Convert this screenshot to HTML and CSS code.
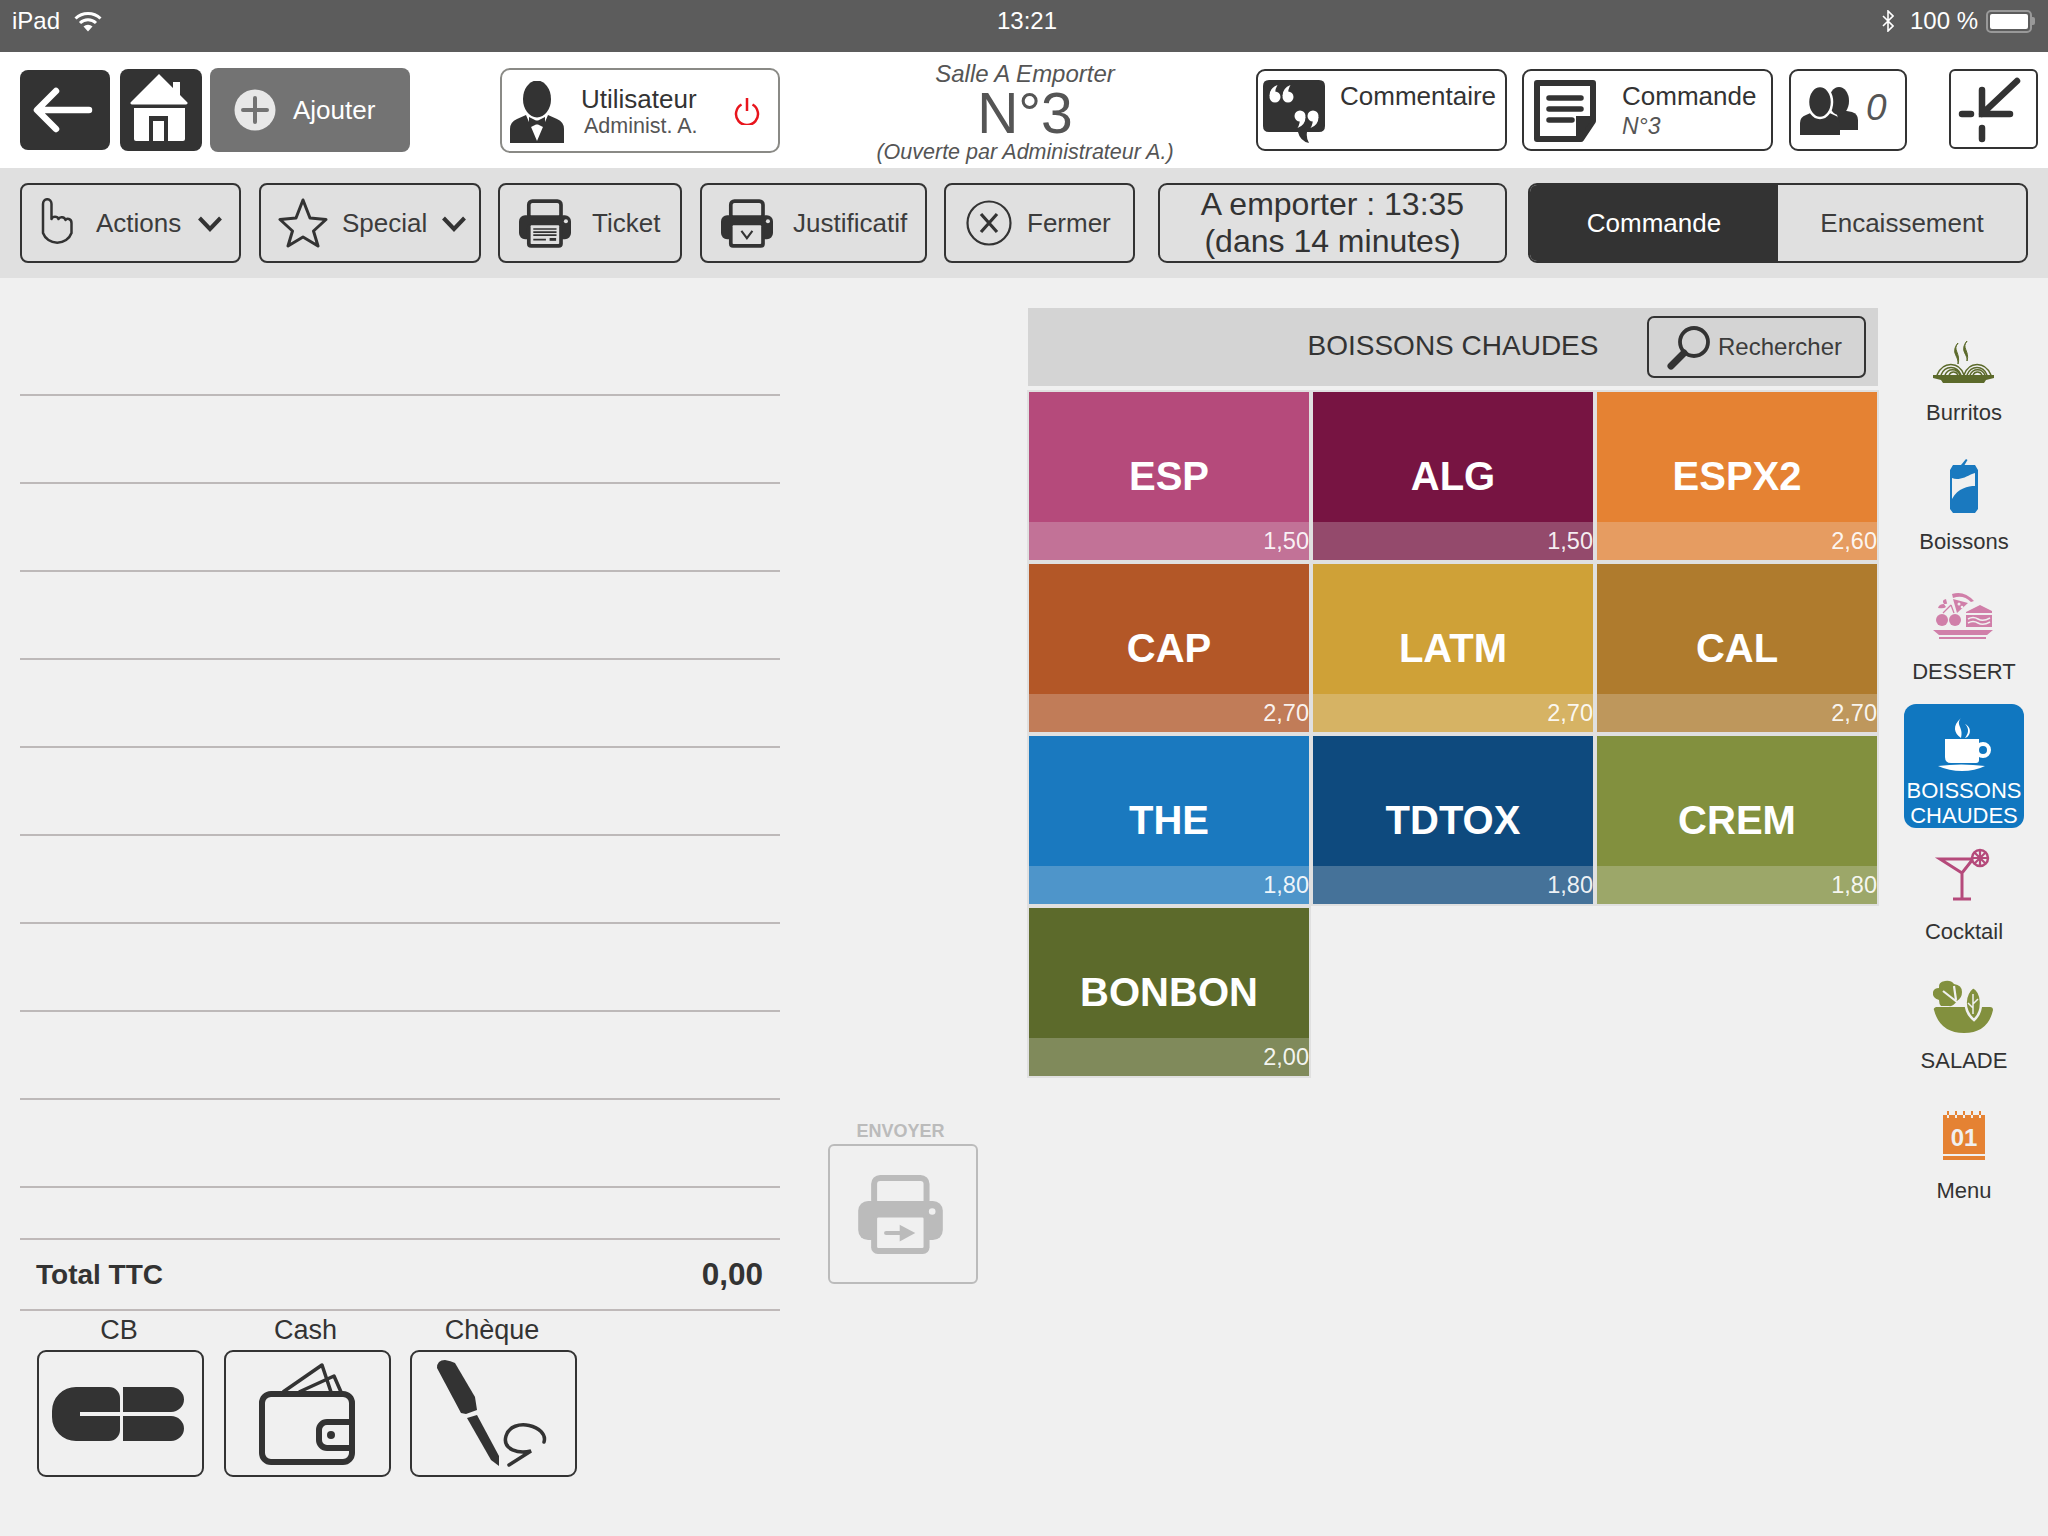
FILE: index.html
```html
<!DOCTYPE html>
<html lang="fr">
<head>
<meta charset="utf-8">
<title>Commande N°3</title>
<link rel="stylesheet" href="styles.css">
</head>
<body>
<div class="status">
  <div class="status-left"><span>iPad</span>
    <svg class="wifi" viewBox="0 0 28 21"><path d="M1.500 7.500a18 18 0 0 1 25 0" fill="none" stroke="#fff" stroke-width="3"/><path d="M6 12a11.500 11.500 0 0 1 16 0" fill="none" stroke="#fff" stroke-width="3"/><path d="M14 20.500l-4.500-5a6.500 6.500 0 0 1 9 0z" fill="#fff"/></svg>
  </div>
  <div class="status-time">13:21</div>
  <div class="status-right">
    <svg class="bt" viewBox="0 0 12 22"><path d="M1 6l10 10-5 5V1l5 5L1 16" fill="none" stroke="#fff" stroke-width="1.600"/></svg>
    <span>100 %</span>
    <span class="battery"><span class="battery-fill"></span></span><span class="battery-nub"></span>
  </div>
</div>

<header class="head">
  <button class="hb hb-back"><svg width="90" height="80" viewBox="0 0 90 80"><path d="M36 21L17 40l19 19M18 40h51" fill="none" stroke="#fff" stroke-width="6.500" stroke-linecap="round" stroke-linejoin="round"/></svg></button>
  <button class="hb hb-home"><svg width="82" height="82" viewBox="0 0 82 82"><path d="M39 5L53 19V13h7v13l7.500 7.500q.5 2-1.500 2H12q-2 0-1.500-2z" fill="#fff"/><path d="M14 39h51v31q0 2-2 2H16q-2 0-2-2z" fill="#fff"/><path d="M29 47h19v25h-4V52H33v20h-4z" fill="#333"/></svg></button>
  <button class="hb hb-add"><svg width="42" height="42" viewBox="0 0 42 42"><circle cx="21" cy="21" r="20.500" fill="#e8e8e8"/><path d="M21 9v24M9 21h24" stroke="#737373" stroke-width="4" stroke-linecap="round"/></svg><span>Ajouter</span></button>
  <div class="user">
    <svg class="avatar" width="54" height="62" viewBox="0 0 54 62"><ellipse cx="27" cy="18" rx="14" ry="18.500" fill="#333"/><path d="M0 62V48q0-7 7-10l9-4 11 26 11-26 9 4q7 3 7 10v14z" fill="#333"/><path d="M19 36l7 3.500h2l7-3.500v11l-7-3.500h-2l-7 3.500z" fill="#333"/></svg>
    <div class="user-text"><div class="user-role">Utilisateur</div><div class="user-name">Administ. A.</div></div>
    <svg class="power" width="26" height="28" viewBox="0 0 26 28"><path d="M7.500 7.500a11 11 0 1 0 11 0M13 1v13" fill="none" stroke="#e8141c" stroke-width="2.500"/></svg>
  </div>
  <div class="table-info">
    <div class="table-room">Salle A Emporter</div>
    <div class="table-num">N°3</div>
    <div class="table-open">(Ouverte par Administrateur A.)</div>
  </div>
  <div class="hc hc-comment">
    <svg width="62" height="64" viewBox="0 0 62 64"><path d="M6 0h50q6 0 6 6v40q0 6-6 6H44q-1 6 2 11-9-2-11-11H6q-6 0-6-6V6q0-6 6-6z" fill="#333"/><g fill="#fff"><circle cx="12" cy="17" r="5.500"/><path d="M6.500 16q0-8 8-11-3 5-2 9z"/><circle cx="25" cy="17" r="5.500"/><path d="M19.500 16q0-8 8-11-3 5-2 9z"/><circle cx="37" cy="36" r="5.500"/><path d="M42.500 37q0 8-8 11 3-5 2-9z"/><circle cx="50" cy="36" r="5.500"/><path d="M55.500 37q0 8-8 11 3-5 2-9z"/></g></svg>
    <div class="hc-title">Commentaire</div>
  </div>
  <div class="hc hc-order">
    <svg width="62" height="62" viewBox="0 0 62 62"><path d="M3 3h56v38L47 59H3z" fill="#fff" stroke="#333" stroke-width="6" stroke-linejoin="round"/><path d="M59 38H44v21" fill="#333" stroke="#333" stroke-width="4"/><path d="M15 18h32M15 29h32M15 40h23" stroke="#333" stroke-width="5.500" stroke-linecap="round"/></svg>
    <div class="hc-text"><div class="hc-title">Commande</div><div class="hc-sub">N°3</div></div>
  </div>
  <div class="hc hc-guests">
    <svg width="58" height="48" viewBox="0 0 58 48"><path d="M36 22l16 3q6 2 6 8v10H40z" fill="#333"/><ellipse cx="39" cy="14" rx="10" ry="14" fill="#333"/><path d="M0 48V36q0-6 6-8l9-4h10l9 4q6 2 6 8v12z" fill="#333"/><ellipse cx="20" cy="15" rx="12" ry="16" fill="#333" stroke="#fff" stroke-width="2.500"/></svg>
    <span class="hc-count">0</span>
  </div>
  <button class="hc-collapse"><svg width="85" height="76" viewBox="0 0 85 76"><path d="M31 19v24h28M31 43L66 10M11 43h9M31 57v11" fill="none" stroke="#333" stroke-width="6.500" stroke-linecap="round"/></svg></button>
</header>

<nav class="tools">
  <button class="tb tb-actions">
    <svg width="32" height="50" viewBox="0 0 32 50"><path d="M2 6a4 4.500 0 0 1 8.500 0V21c1-3 6-3 7 0 1-2.500 6-2.500 7 1 1-2 6-1.500 6 3v10a15 14 0 0 1-28.500 0z" fill="none" stroke="#333" stroke-width="2.500" stroke-linejoin="round"/></svg>
    <span>Actions</span>
    <svg class="chev chev-actions" width="26" height="17" viewBox="0 0 26 17"><path d="M2.500 3L13 14 23.500 3" fill="none" stroke="#333" stroke-width="4"/></svg>
  </button>
  <button class="tb tb-special">
    <svg width="50" height="50" viewBox="0 0 50 50"><path d="M25 2l7 18 16 1.500-12.500 11.500 4.500 15-15-9-15 9 4.500-15L2 21.500 18 20z" fill="none" stroke="#333" stroke-width="3" stroke-linejoin="round"/></svg>
    <span>Special</span>
    <svg class="chev" width="26" height="17" viewBox="0 0 26 17"><path d="M2.500 3L13 14 23.500 3" fill="none" stroke="#333" stroke-width="4"/></svg>
  </button>
  <button class="tb tb-ticket">
    <svg width="52" height="49" viewBox="0 0 255 238"><rect x="48" y="9" width="158" height="85" rx="18" fill="none" stroke="#333" stroke-width="18"/><rect y="78" width="255" height="118" rx="30" fill="#333"/><rect x="39" y="123" width="176" height="115" rx="20" fill="#333"/><rect x="57" y="128" width="140" height="92" rx="4" fill="#e0e0e0"/><circle cx="230" cy="108" r="10" fill="#e0e0e0"/><path d="M70 146h114M70 161h114M70 176h114M70 198h62" stroke="#333" stroke-width="8"/><rect x="150" y="190" width="32" height="14" fill="#333"/></svg>
    <span>Ticket</span>
  </button>
  <button class="tb tb-proof">
    <svg width="52" height="49" viewBox="0 0 255 238"><rect x="48" y="9" width="158" height="85" rx="18" fill="none" stroke="#333" stroke-width="18"/><rect y="78" width="255" height="118" rx="30" fill="#333"/><rect x="39" y="123" width="176" height="115" rx="20" fill="#333"/><rect x="57" y="128" width="140" height="92" rx="4" fill="#e0e0e0"/><circle cx="230" cy="108" r="10" fill="#e0e0e0"/><path d="M100 155l27 36 27-36" fill="none" stroke="#333" stroke-width="10"/></svg>
    <span>Justificatif</span>
  </button>
  <button class="tb tb-close">
    <svg width="46" height="46" viewBox="0 0 46 46"><circle cx="23" cy="23" r="21.500" fill="none" stroke="#333" stroke-width="2.200"/><path d="M15 14l16 18M31 14L15 32" stroke="#333" stroke-width="3.200"/></svg>
    <span>Fermer</span>
  </button>
  <div class="tb-time">A emporter : 13:35<br>(dans 14 minutes)</div>
  <div class="seg"><div class="seg-item seg-on">Commande</div><div class="seg-item">Encaissement</div></div>
</nav>

<main class="main">
  <section class="ticket">
    <div class="lines">
      <div class="line"></div><div class="line"></div><div class="line"></div><div class="line"></div><div class="line"></div>
      <div class="line"></div><div class="line"></div><div class="line"></div><div class="line"></div><div class="line"></div>
    </div>
    <div class="total"><span class="total-label">Total TTC</span><span class="total-value">0,00</span></div>
    <div class="pay">
      <div class="pay-item"><div class="pay-label">CB</div><button class="pay-box">
        <svg class="cb-logo" width="132" height="54" viewBox="0 0 132 54"><path d="M24 0h33a11 11 0 0 1 11 11v14H28v4h40v14a11 11 0 0 1-11 11H24A24 24 0 0 1 0 30v-6A24 24 0 0 1 24 0z" fill="#333"/><path d="M71 0h48a13 12.500 0 0 1 0 25H71zM71 29h48a13 12.500 0 0 1 0 25H71z" fill="#333"/></svg>
      </button></div>
      <div class="pay-item"><div class="pay-label">Cash</div><button class="pay-box">
        <svg width="100" height="104" viewBox="0 0 100 104"><rect x="5" y="32" width="90" height="68" rx="9" fill="none" stroke="#333" stroke-width="6"/><path d="M97 60H70a8 8 0 0 0-8 8v10a8 8 0 0 0 8 8h27" fill="none" stroke="#333" stroke-width="6"/><circle cx="74" cy="73" r="4" fill="#333"/><path d="M26 30L65 3l9 27M42 30l35-16 7 16" fill="none" stroke="#333" stroke-width="3.500" stroke-linejoin="round"/></svg>
      </button></div>
      <div class="pay-item"><div class="pay-label">Chèque</div><button class="pay-box">
        <svg width="114" height="108" viewBox="0 0 114 108"><path d="M0 8Q0 0 8 0q6 1 10 3l20 34 2 13-11 4-5-1z" fill="#333"/><path d="M30 58l10-3 22 41v10l-8-6z" fill="#333"/><path d="M107 82c5-16-32-26-38-6-4 14 13 18 25 15L72 105" fill="none" stroke="#333" stroke-width="3.500" stroke-linecap="round"/></svg>
      </button></div>
    </div>
  </section>

  <section class="send">
    <div class="send-label">ENVOYER</div>
    <button class="send-box">
      <svg width="85" height="79" viewBox="0 0 255 238"><rect x="48" y="9" width="158" height="85" rx="18" fill="none" stroke="#bbb" stroke-width="18"/><rect y="78" width="255" height="118" rx="30" fill="#bbb"/><rect x="39" y="123" width="176" height="115" rx="20" fill="#bbb"/><rect x="57" y="128" width="140" height="92" rx="4" fill="#f0f0f0"/><circle cx="223" cy="110" r="10" fill="#f0f0f0"/><path d="M84 175h44" stroke="#bbb" stroke-width="12" stroke-linecap="round"/><path d="M125 150l47 25-47 25z" fill="#bbb"/></svg>
    </button>
  </section>

  <section class="products">
    <div class="cat-head">
      <div class="cat-title">BOISSONS CHAUDES</div>
      <button class="search"><svg width="46" height="48" viewBox="0 0 46 48"><circle cx="29" cy="19" r="14" fill="none" stroke="#333" stroke-width="3.800"/><path d="M19 30L6 43" stroke="#333" stroke-width="7" stroke-linecap="round"/></svg><span>Rechercher</span></button>
    </div>
    <div class="grid">
      <div class="tile t-esp"><span class="tile-name">ESP</span><span class="tile-price">1,50</span></div>
      <div class="tile t-alg"><span class="tile-name">ALG</span><span class="tile-price">1,50</span></div>
      <div class="tile t-espx"><span class="tile-name">ESPX2</span><span class="tile-price">2,60</span></div>
      <div class="tile t-cap"><span class="tile-name">CAP</span><span class="tile-price">2,70</span></div>
      <div class="tile t-latm"><span class="tile-name">LATM</span><span class="tile-price">2,70</span></div>
      <div class="tile t-cal"><span class="tile-name">CAL</span><span class="tile-price">2,70</span></div>
      <div class="tile t-the"><span class="tile-name">THE</span><span class="tile-price">1,80</span></div>
      <div class="tile t-tdtox"><span class="tile-name">TDTOX</span><span class="tile-price">1,80</span></div>
      <div class="tile t-crem"><span class="tile-name">CREM</span><span class="tile-price">1,80</span></div>
      <div class="tile t-bonbon"><span class="tile-name">BONBON</span><span class="tile-price">2,00</span></div>
    </div>
  </section>

  <aside class="cats">
    <div class="cat">
      <svg class="cat-ico" viewBox="0 0 70 70"><path d="M29 28c-6 7 3 10 0 21 1-8-8-11 0-21zM38 26c-6 7 3 10 0 20 1-7-8-10 0-20z" fill="#5c6a2b" stroke="#5c6a2b"/><g fill="none" stroke="#5c6a2b" stroke-width="1.500"><path d="M8 60c6-14 22-14 27 0M12 60c4-10 16-10 20 0M16 60c3-7 12-7 15 0M20 60c2-4 7-4 9 0M35 60c5-14 21-14 27 0M38 60c4-10 16-10 20 0M41 60c3-7 12-7 15 0M44 60c2-4 7-4 9 0"/></g><path d="M4 60h61v3l-8 2-2 3H14l-2-3-8-2z" fill="#5c6a2b"/></svg>
      <div class="cat-label">Burritos</div>
    </div>
    <div class="cat">
      <svg class="cat-ico" viewBox="0 0 70 70"><path d="M32 20l5-6 1.500 1-3 5" fill="#1a79bf"/><path d="M24 20h22l3 5v39l-3 4H24l-3-4V25z" fill="#1a79bf"/><path d="M23 33c6 3 14-1 20-4l3-1v13c-7 0-17 2-23 13z" fill="#f0f0f0"/></svg>
      <div class="cat-label">Boissons</div>
    </div>
    <div class="cat">
      <svg class="cat-ico" viewBox="0 0 70 70"><g fill="#d07fa9"><circle cx="13" cy="45" r="6"/><circle cx="26" cy="45" r="6"/><path d="M15 29q-5 0-6 4 6 1 8-1zM17 24q-5 1-2 5 4 0 3-1z"/><path d="M23 19q12-4 22 7l-3 1q-8-8-18-4z"/><path d="M24 24l15 4-11 10z"/><path d="M37 37l14-7 12 6v2H37zM37 40h26v12H37z"/><path d="M4 55h60l-6 5H10zM10 62h47v2H10z"/></g><path d="M14 38q3-3 8-8M25 38l-3-8" fill="none" stroke="#d07fa9" stroke-width="1.300"/><path d="M39 44q5-3 10 0t12-1M39 48q5-3 10 0t12-1" fill="none" stroke="#f0f0f0" stroke-width="1.500"/><circle cx="30" cy="29" r="1.500" fill="#f0f0f0"/><circle cx="33" cy="32" r="1.300" fill="#f0f0f0"/></svg>
      <div class="cat-label">DESSERT</div>
    </div>
    <div class="cat cat-on">
      <svg class="cat-ico" viewBox="0 0 70 70"><path d="M32 14c-6 7 3 9 0 20-7-5-9-12 0-20zM36 20c5 5 3 10 0 14 5-1 8-10 0-14z" fill="#fff"/><path d="M16 35h34v21q0 3-3 3H22q-6 0-6-6z" fill="#fff"/><circle cx="54" cy="46" r="6" fill="none" stroke="#fff" stroke-width="4"/><path d="M9 62q23-3 47 0-10 5-23 5T9 62z" fill="#fff"/></svg>
      <div class="cat-label">BOISSONS<br>CHAUDES</div>
    </div>
    <div class="cat">
      <svg class="cat-ico" viewBox="0 0 70 70"><path d="M11 25h33L33 39zM33 39v26M24 65h18" fill="none" stroke="#b54a7b" stroke-width="3"/><circle cx="51" cy="24" r="8" fill="#f0f0f0" stroke="#b54a7b" stroke-width="2.500"/><path d="M51 16v16M43 24h16M45.500 18.500l11 11M56.500 18.500l-11 11" stroke="#b54a7b" stroke-width="2.200"/></svg>
      <div class="cat-label">Cocktail</div>
    </div>
    <div class="cat">
      <svg class="cat-ico" viewBox="0 0 70 70"><path d="M5 46q-1-2 2-3h54q3 0 3 3-5 23-29 23T5 46z" fill="#82903e"/><path d="M10 36q-7-2-6-8 1-4 6-4-1-6 6-7 6-1 9 3 8 1 8 8 0 6-5 9-4 6-8 5H12q-2-2-2-6z" fill="#82903e"/><path d="M14 27l14 11M25 22l2 14" stroke="#f0f0f0" stroke-width="2.200" fill="none"/><path d="M44 23c10 5 11 24 1 33-11-9-11-25-1-33z" fill="#82903e" stroke="#f0f0f0" stroke-width="2.500"/><path d="M44 30v20M44 40l5-5M44 44l-5-5" stroke="#f0f0f0" stroke-width="1.500"/></svg>
      <div class="cat-label">SALADE</div>
    </div>
    <div class="cat">
      <svg class="cat-ico" viewBox="0 0 70 70"><path d="M14 21h42v39H14zM14 62h42v4H14z" fill="#e58233"/><path d="M18 17h2v5h-2zM26 17h2v5h-2zM34 17h2v5h-2zM42 17h2v5h-2zM50 17h2v5h-2z" fill="#e58233"/><path d="M18 21h2v3h-2zM26 21h2v3h-2zM34 21h2v3h-2zM42 21h2v3h-2zM50 21h2v3h-2z" fill="#f0f0f0"/><text class="cal-num" x="35" y="52" text-anchor="middle">01</text></svg>
      <div class="cat-label">Menu</div>
    </div>
  </aside>
</main>
</body>
</html>
```
FILE: styles.css
```css
* { box-sizing: border-box; }
html, body { margin: 0; padding: 0; }
body {
  width: 2048px;
  height: 1536px;
  overflow: hidden;
  background: #f0f0f0;
  color: #333;
  font-family: "Liberation Sans", Arial, sans-serif;
  font-size: 26px;
}
button {
  font: inherit;
  color: inherit;
  background: none;
  border: 0;
  padding: 0;
  margin: 0;
}
svg { display: block; flex: none; }

/* status bar */
.status {
  height: 52px;
  background: #5c5c5c;
  color: #fff;
  font-size: 24px;
  display: grid;
  grid-template-columns: 1fr auto 1fr;
  align-items: center;
  padding: 0 12px 10px;
}
.status-left { display: flex; align-items: center; gap: 14px; }
.status-time { margin-left: 6px; }
.wifi { width: 28px; height: 21px; }
.bt { width: 12px; height: 22px; }
.status-right { display: flex; align-items: center; justify-content: flex-end; }
.status-right .bt { margin-right: 16px; }
.battery {
  width: 46px;
  height: 23px;
  margin-left: 8px;
  border: 2px solid #999;
  border-radius: 5px;
  padding: 2px;
  display: block;
}
.battery-fill { display: block; height: 100%; background: #fff; border-radius: 2px; }
.battery-nub { width: 3px; height: 8px; background: #999; border-radius: 0 2px 2px 0; margin-right: 1px; }

/* header */
.head {
  height: 116px;
  background: #fff;
  display: flex;
  align-items: center;
  padding-left: 20px;
}
.hb { display: flex; align-items: center; border-radius: 8px; }
.hb-back { width: 90px; height: 80px; background: #333; }
.hb-home { width: 82px; height: 82px; background: #333; margin-left: 10px; }
.hb-add {
  width: 200px;
  height: 84px;
  background: #737373;
  color: #fff;
  margin-left: 8px;
  padding-left: 24px;
  gap: 17px;
}
.user {
  width: 280px;
  height: 85px;
  margin-left: 90px;
  border: 2.5px solid #8a8a86;
  border-radius: 10px;
  display: flex;
  align-items: center;
  padding-left: 8px;
}
.avatar { margin-top: 4px; }
.user-text { margin-left: 17px; margin-top: 2px; }
.user-role { line-height: 30px; }
.user-name { font-size: 21.500px; color: #555; line-height: 24px; margin-left: 3px; }
.power { margin-left: 36px; margin-top: 2px; }

.table-info {
  width: 460px;
  margin-left: 15px;
  margin-top: 6px;
  text-align: center;
  color: #555;
  font-style: italic;
}
.table-room { font-size: 24px; line-height: 28px; }
.table-num { font-size: 57px; font-style: normal; line-height: 50px; }
.table-open { font-size: 21.500px; line-height: 28px; }

.hc {
  height: 82px;
  border: 2px solid #333;
  border-radius: 9px;
  display: flex;
  align-items: flex-start;
  background: #fff;
}
.hc-comment { width: 251px; margin-left: 1px; padding: 9px 0 0 5px; gap: 15px; }
.hc-comment .hc-title { line-height: 30px; margin-top: 1px; }
.hc-order { width: 251px; margin-left: 15px; padding: 9px 0 0 10px; gap: 26px; }
.hc-title { line-height: 30px; }
.hc-order .hc-text { margin-top: 1px; }
.hc-sub { font-size: 23px; font-style: italic; color: #555; line-height: 30px; }
.hc-guests { width: 118px; margin-left: 16px; padding: 16px 0 0 9px; gap: 8px; }
.hc-count { font-size: 37px; font-style: italic; color: #555; line-height: 42px; }
.hc-collapse {
  width: 89px;
  height: 80px;
  margin-left: 42px;
  border: 2px solid #333;
  border-radius: 6px;
  margin-top: -2px;
}

/* toolbar */
.tools {
  height: 110px;
  background: #e0e0e0;
  display: flex;
  align-items: center;
  padding-left: 20px;
}
.tb {
  height: 80px;
  border: 2px solid #333;
  border-radius: 8px;
  display: flex;
  align-items: center;
  padding-left: 19px;
  gap: 20px;
  color: #3c3c3c;
}
.tb-actions { width: 221px; gap: 23px; }
.chev-actions { margin-left: -7px; }
.tb-special { width: 222px; margin-left: 18px; padding-left: 17px; gap: 14px; }
.tb-ticket { width: 184px; margin-left: 17px; gap: 21px; }
.tb-proof { width: 227px; margin-left: 18px; }
.tb-close { width: 191px; margin-left: 17px; padding-left: 20px; gap: 15px; }
.tb-time {
  width: 349px;
  height: 80px;
  margin-left: 23px;
  border: 2px solid #333;
  border-radius: 9px;
  font-size: 32px;
  line-height: 37px;
  text-align: center;
  padding-top: 1px;
}
.seg {
  width: 500px;
  height: 80px;
  margin-left: 21px;
  border: 2px solid #333;
  border-radius: 9px;
  display: flex;
  overflow: hidden;
}
.seg-item { flex: 1; display: flex; align-items: center; justify-content: center; color: #3c3c3c; }
.seg-on { background: #333; color: #fff; }

/* main */
.main { display: flex; height: 1258px; }
.ticket { width: 760px; margin-left: 20px; flex: none; }
.lines { padding-top: 30px; }
.line { height: 88px; border-bottom: 2px solid #bdb9b9; }
.total {
  margin-top: 50px;
  height: 73px;
  border-top: 2.500px solid #bfb9b9;
  border-bottom: 2.500px solid #bfb9b9;
  display: flex;
  align-items: center;
  justify-content: space-between;
  padding: 0 17px 0 16px;
  font-weight: 700;
}
.total-label { font-size: 28px; }
.total-value { font-size: 31.500px; }
.pay { display: flex; gap: 19.500px; padding-left: 17px; }
.pay-item { width: 167px; }
.pay-label { height: 39px; line-height: 39px; text-align: center; font-size: 27px; padding-right: 3px; }
.pay-box {
  width: 167px;
  height: 127px;
  border: 2px solid #333;
  border-radius: 9px;
  display: flex;
  align-items: center;
  justify-content: center;
}
.cb-logo { margin-right: 6px; }

.send { width: 248px; flex: none; padding: 841px 0 0 48px; }
.send-label { width: 145px; font-size: 18px; font-weight: 700; color: #bbb; text-align: center; line-height: 24px; margin-bottom: 1px; }
.send-box {
  width: 150px;
  height: 140px;
  border: 2.500px solid #bbb;
  border-radius: 6px;
  display: flex;
  align-items: center;
  justify-content: center;
}
.send-box svg { margin-right: 5px; }

.products { width: 850px; flex: none; padding-top: 30px; }
.cat-head {
  height: 78px;
  background: #d4d4d4;
  position: relative;
  display: flex;
  align-items: center;
  justify-content: center;
}
.cat-title { font-size: 28px; margin-bottom: 2px; }
.search {
  position: absolute;
  right: 12px;
  top: 8px;
  width: 219px;
  height: 62px;
  border: 2.500px solid #333;
  border-radius: 7px;
  display: flex;
  align-items: center;
  padding-left: 16px;
  gap: 7px;
  color: #3c3c3c;
  font-size: 24px;
}
.grid {
  display: grid;
  grid-template-columns: repeat(3, 280px);
  grid-auto-rows: 168px;
  gap: 4px;
  margin: 6px 0 0 1px;
}
.tile {
  position: relative;
  box-shadow: 0 0 0 2px #e0e0e0;
  color: #fff;
  display: flex;
  align-items: center;
  justify-content: center;
}
.tile-name { font-size: 40px; font-weight: 700; }
.tile-price {
  position: absolute;
  left: 0;
  right: 0;
  bottom: 0;
  height: 38px;
  line-height: 39px;
  background: rgba(235, 235, 235, 0.25);
  text-align: right;
  font-size: 23.500px;
  color: rgba(255, 255, 255, 0.92);
}
.t-esp { background: #b54a7b; }
.t-alg { background: #771442; }
.t-espx { background: #e58233; }
.t-cap { background: #b35727; }
.t-latm { background: #cfa137; }
.t-cal { background: #af7b2d; }
.t-the { background: #1a79bf; }
.t-tdtox { background: #0e4a7e; }
.t-crem { background: #82903e; }
.t-bonbon { background: #5c6a2b; }

.cats {
  width: 120px;
  flex: none;
  margin-left: 26px;
  padding-top: 37px;
  display: flex;
  flex-direction: column;
  gap: 5.800px;
}
.cat {
  height: 124px;
  display: flex;
  flex-direction: column;
  align-items: center;
  border-radius: 12px;
}
.cat-ico { width: 70px; height: 70px; }
.cat-label {
  height: 54px;
  display: flex;
  align-items: center;
  text-align: center;
  font-size: 22px;
  line-height: 25px;
}
.cat-on { background: #1077c0; color: #fff; }
.cat-on .cat-label { padding-top: 3px; }
.cal-num { font-size: 24px; font-weight: 700; fill: #f0f0f0; font-family: "Liberation Sans", Arial, sans-serif; }
```
